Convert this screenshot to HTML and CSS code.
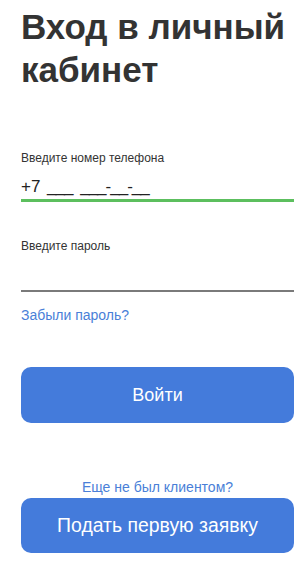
FILE: index.html
```html
<!DOCTYPE html>
<html lang="ru">
<head>
<meta charset="utf-8">
<link rel="stylesheet" href="styles.css">
</head>
<body>
<main class="page">
  <h1 class="title">Вход в личный кабинет</h1>
  <div class="field field-phone">
    <label class="label">Введите номер телефона</label>
    <div class="value">+7 <span class="mask">___ ___-__-__</span></div>
    <div class="line line-active"></div>
  </div>
  <div class="field field-pass">
    <label class="label">Введите пароль</label>
    <div class="value value-empty"></div>
    <div class="line"></div>
  </div>
  <a class="link forgot">Забыли пароль?</a>
  <button class="btn btn-login">Войти</button>
  <a class="link new-client">Еще не был клиентом?</a>
  <button class="btn btn-apply">Подать первую заявку</button>
</main>
</body>
</html>
```
FILE: styles.css
```css
html, body {
  margin: 0;
  padding: 0;
  background: #fff;
}
body {
  font-family: "Liberation Sans", Arial, sans-serif;
  color: #333;
}
.page {
  width: 308px;
  height: 568px;
  box-sizing: border-box;
  padding: 5px 14px 0 21px;
  display: flex;
  flex-direction: column;
  overflow: hidden;
}
.title {
  margin: 0;
  font-size: 35px;
  line-height: 43px;
  font-weight: bold;
  color: #333;
}
.field {
  display: flex;
  flex-direction: column;
}
.field-phone {
  margin-top: 60px;
}
.field-pass {
  margin-top: 37px;
}
.label {
  font-size: 12px;
  line-height: 14px;
  color: #333;
}
.value {
  font-size: 17px;
  line-height: 20px;
  height: 20px;
  margin-top: 12px;
  color: #222;
}
.mask {
  margin-left: 2px;
  letter-spacing: -1px;
  word-spacing: 4px;
}
.value-empty {
  height: 33px;
  margin-top: 0;
}
.line {
  height: 2px;
  background: #7a7a7a;
  margin-top: 4px;
}
.line-active {
  height: 3px;
  background: #5cbf5e;
  margin-top: 2px;
}
.link {
  color: #4a7fd8;
  text-decoration: none;
}
.forgot {
  font-size: 14px;
  line-height: 16px;
  margin-top: 15px;
}
.btn {
  border: 0;
  border-radius: 10px;
  background: #447bdb;
  color: #fff;
  font-family: "Liberation Sans", Arial, sans-serif;
  font-size: 18px;
  height: 56px;
  width: 100%;
  padding: 0;
}
.btn-login {
  margin-top: 44px;
}
.new-client {
  align-self: center;
  font-size: 14px;
  line-height: 16px;
  margin-top: 56px;
}
.btn-apply {
  margin-top: 3px;
  height: 55px;
  font-size: 19.4px;
}
```
